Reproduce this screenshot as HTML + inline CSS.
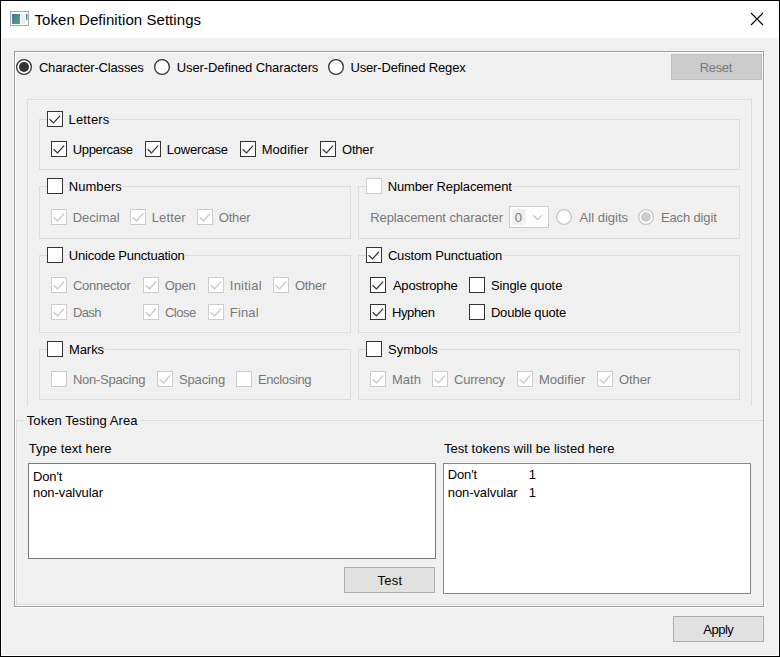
<!DOCTYPE html>
<html><head><meta charset="utf-8"><title>Token Definition Settings</title>
<style>
html,body{margin:0;padding:0;}
body{width:780px;height:657px;overflow:hidden;background:#f0f0f0;font-family:"Liberation Sans",sans-serif;}
#win{position:absolute;left:0;top:0;width:778px;height:655px;border:1px solid #000;background:#f0f0f0;overflow:hidden;box-shadow:inset 0 0 0 1px #fff;}
#win>*{position:absolute;box-sizing:border-box;}
#tb{left:0;top:0;width:778px;height:37px;background:#fff;}
.t{font-size:13px;line-height:24px;height:24px;white-space:pre;color:#000;}
.d{color:#787878;}
.gb{border:1px solid #dcdcdc;}
.cap{background:#f0f0f0;height:16px;}
.cb{width:16px;height:16px;background:#fff;border:1px solid #333;}
.cb.off{border-color:#ccc;}
.rb{width:16px;height:16px;background:#fff;border:1px solid #333;border-radius:50%;}
.rb.off{border-color:#ccc;}
.btn{background:#e1e1e1;border:1px solid #adadad;}
.btn.off{background:#ccc;border-color:#bfbfbf;}
svg{position:absolute;left:-1px;top:-1px;}
</style></head><body><div id="win">

<div id="tb"></div>
<svg style="left:9px;top:10px" width="20" height="16" viewBox="0 0 20 16">
<defs><linearGradient id="g1" x1="0" y1="0" x2="1" y2="1"><stop offset="0" stop-color="#3f6fb0"/><stop offset="1" stop-color="#4fae5a"/></linearGradient></defs>
<rect x="0.5" y="0.5" width="18" height="14" fill="#fff" stroke="#a2a7b1"/>
<rect x="2" y="3" width="8" height="10" fill="url(#g1)"/>
<rect x="11" y="3" width="4" height="10" fill="#ececec"/>
<rect x="16" y="3" width="1.5" height="6" fill="url(#g1)"/>
</svg>
<div class="t" style="left:33.5px;top:4px;font-size:15px;line-height:30px;height:30px;letter-spacing:0.06px">Token Definition Settings</div>
<svg style="left:749px;top:11px" width="14" height="14" viewBox="0 0 14 14"><path d="M1 1 L13 13 M13 1 L1 13" stroke="#000" stroke-width="1.1" fill="none"/></svg>
<div style="left:14px;top:51px;width:750px;height:556px;border:1px solid #fff;"></div>
<div style="left:13px;top:50px;width:750px;height:556px;border:1px solid #a0a0a0;"></div>
<div style="left:14px;top:51px;width:748px;height:554px;border:1px solid #fff;border-right-color:#f5f5f5;border-bottom-color:#fbfbfb"></div>
<div class="gb" style="left:26px;top:98px;width:725px;height:307px;border-bottom:none"></div>
<div class="gb" style="left:38px;top:118px;width:701px;height:51px"></div>
<div class="cap" style="left:46px;top:110px;width:63px"></div>
<div class="gb" style="left:38px;top:185px;width:312px;height:53px"></div>
<div class="cap" style="left:46px;top:177px;width:75px"></div>
<div class="gb" style="left:357px;top:185px;width:382px;height:53px"></div>
<div class="cap" style="left:365px;top:177px;width:147px"></div>
<div class="gb" style="left:38px;top:254px;width:312px;height:78px"></div>
<div class="cap" style="left:46px;top:246px;width:138px"></div>
<div class="gb" style="left:357px;top:254px;width:382px;height:78px"></div>
<div class="cap" style="left:365px;top:246px;width:137px"></div>
<div class="gb" style="left:38px;top:348px;width:312px;height:51px"></div>
<div class="cap" style="left:46px;top:340px;width:58px"></div>
<div class="gb" style="left:357px;top:348px;width:382px;height:51px"></div>
<div class="cap" style="left:365px;top:340px;width:72px"></div>
<div class="gb" style="left:15px;top:419px;width:747px;height:185px;border-right:none"></div>
<div class="cap" style="left:23px;top:411px;width:116px"></div>
<svg style="left:15px;top:58px" width="16" height="16" viewBox="0 0 16 16"><circle cx="8" cy="8" r="7.35" fill="#fff" stroke="#333" stroke-width="1.3"/><circle cx="8" cy="8" r="5" fill="#333"/></svg>
<svg style="left:153px;top:58px" width="16" height="16" viewBox="0 0 16 16"><circle cx="8" cy="8" r="7.35" fill="#fff" stroke="#333" stroke-width="1.3"/></svg>
<svg style="left:327px;top:58px" width="16" height="16" viewBox="0 0 16 16"><circle cx="8" cy="8" r="7.35" fill="#fff" stroke="#333" stroke-width="1.3"/></svg>
<div class="btn off" style="left:670px;top:53px;width:91px;height:26px"></div>
<div class="cb" style="left:46px;top:110px"><svg width="16" height="16" viewBox="0 0 16 16"><path d="M2.6 8.3 L6.5 11.9 L13.1 4.6" stroke="#333" stroke-width="1.25" fill="none"/></svg></div>
<div class="cb" style="left:50px;top:140px"><svg width="16" height="16" viewBox="0 0 16 16"><path d="M2.6 8.3 L6.5 11.9 L13.1 4.6" stroke="#333" stroke-width="1.25" fill="none"/></svg></div>
<div class="cb" style="left:144px;top:140px"><svg width="16" height="16" viewBox="0 0 16 16"><path d="M2.6 8.3 L6.5 11.9 L13.1 4.6" stroke="#333" stroke-width="1.25" fill="none"/></svg></div>
<div class="cb" style="left:239px;top:140px"><svg width="16" height="16" viewBox="0 0 16 16"><path d="M2.6 8.3 L6.5 11.9 L13.1 4.6" stroke="#333" stroke-width="1.25" fill="none"/></svg></div>
<div class="cb" style="left:319px;top:140px"><svg width="16" height="16" viewBox="0 0 16 16"><path d="M2.6 8.3 L6.5 11.9 L13.1 4.6" stroke="#333" stroke-width="1.25" fill="none"/></svg></div>
<div class="cb" style="left:46px;top:177px"></div>
<div class="cb off" style="left:50px;top:208px"><svg width="16" height="16" viewBox="0 0 16 16"><path d="M2.6 8.3 L6.5 11.9 L13.1 4.6" stroke="#ccc" stroke-width="1.5" fill="none"/></svg></div>
<div class="cb off" style="left:129px;top:208px"><svg width="16" height="16" viewBox="0 0 16 16"><path d="M2.6 8.3 L6.5 11.9 L13.1 4.6" stroke="#ccc" stroke-width="1.5" fill="none"/></svg></div>
<div class="cb off" style="left:196px;top:208px"><svg width="16" height="16" viewBox="0 0 16 16"><path d="M2.6 8.3 L6.5 11.9 L13.1 4.6" stroke="#ccc" stroke-width="1.5" fill="none"/></svg></div>
<div class="cb off" style="left:365px;top:177px"></div>
<div style="left:508px;top:205px;width:40px;height:22px;background:#fff;border:1px solid #ccc"></div>
<div style="left:511px;top:208px;width:14px;height:16px;background:#f0f0f0"></div>
<svg style="left:531px;top:212px" width="12" height="8" viewBox="0 0 12 8"><path d="M1.2 2.4 L5.6 6.7 L9.8 2.4" stroke="#999" stroke-width="1" fill="none"/></svg>
<svg style="left:555px;top:208px" width="16" height="16" viewBox="0 0 16 16"><circle cx="8" cy="8" r="7.35" fill="#fff" stroke="#c6c6c6" stroke-width="1.3"/></svg>
<svg style="left:637px;top:208px" width="16" height="16" viewBox="0 0 16 16"><circle cx="8" cy="8" r="7.35" fill="#fff" stroke="#c6c6c6" stroke-width="1.3"/><circle cx="8" cy="8" r="5" fill="#ccc"/></svg>
<div class="cb" style="left:46px;top:246px"></div>
<div class="cb off" style="left:50px;top:276px"><svg width="16" height="16" viewBox="0 0 16 16"><path d="M2.6 8.3 L6.5 11.9 L13.1 4.6" stroke="#ccc" stroke-width="1.5" fill="none"/></svg></div>
<div class="cb off" style="left:142px;top:276px"><svg width="16" height="16" viewBox="0 0 16 16"><path d="M2.6 8.3 L6.5 11.9 L13.1 4.6" stroke="#ccc" stroke-width="1.5" fill="none"/></svg></div>
<div class="cb off" style="left:207px;top:276px"><svg width="16" height="16" viewBox="0 0 16 16"><path d="M2.6 8.3 L6.5 11.9 L13.1 4.6" stroke="#ccc" stroke-width="1.5" fill="none"/></svg></div>
<div class="cb off" style="left:272px;top:276px"><svg width="16" height="16" viewBox="0 0 16 16"><path d="M2.6 8.3 L6.5 11.9 L13.1 4.6" stroke="#ccc" stroke-width="1.5" fill="none"/></svg></div>
<div class="cb off" style="left:50px;top:303px"><svg width="16" height="16" viewBox="0 0 16 16"><path d="M2.6 8.3 L6.5 11.9 L13.1 4.6" stroke="#ccc" stroke-width="1.5" fill="none"/></svg></div>
<div class="cb off" style="left:142px;top:303px"><svg width="16" height="16" viewBox="0 0 16 16"><path d="M2.6 8.3 L6.5 11.9 L13.1 4.6" stroke="#ccc" stroke-width="1.5" fill="none"/></svg></div>
<div class="cb off" style="left:207px;top:303px"><svg width="16" height="16" viewBox="0 0 16 16"><path d="M2.6 8.3 L6.5 11.9 L13.1 4.6" stroke="#ccc" stroke-width="1.5" fill="none"/></svg></div>
<div class="cb" style="left:365px;top:246px"><svg width="16" height="16" viewBox="0 0 16 16"><path d="M2.6 8.3 L6.5 11.9 L13.1 4.6" stroke="#333" stroke-width="1.25" fill="none"/></svg></div>
<div class="cb" style="left:369px;top:276px"><svg width="16" height="16" viewBox="0 0 16 16"><path d="M2.6 8.3 L6.5 11.9 L13.1 4.6" stroke="#333" stroke-width="1.25" fill="none"/></svg></div>
<div class="cb" style="left:468px;top:276px"></div>
<div class="cb" style="left:369px;top:303px"><svg width="16" height="16" viewBox="0 0 16 16"><path d="M2.6 8.3 L6.5 11.9 L13.1 4.6" stroke="#333" stroke-width="1.25" fill="none"/></svg></div>
<div class="cb" style="left:468px;top:303px"></div>
<div class="cb" style="left:46px;top:340px"></div>
<div class="cb off" style="left:50px;top:370px"></div>
<div class="cb off" style="left:156px;top:370px"><svg width="16" height="16" viewBox="0 0 16 16"><path d="M2.6 8.3 L6.5 11.9 L13.1 4.6" stroke="#ccc" stroke-width="1.5" fill="none"/></svg></div>
<div class="cb off" style="left:235px;top:370px"></div>
<div class="cb" style="left:365px;top:340px"></div>
<div class="cb off" style="left:369px;top:370px"><svg width="16" height="16" viewBox="0 0 16 16"><path d="M2.6 8.3 L6.5 11.9 L13.1 4.6" stroke="#ccc" stroke-width="1.5" fill="none"/></svg></div>
<div class="cb off" style="left:431px;top:370px"><svg width="16" height="16" viewBox="0 0 16 16"><path d="M2.6 8.3 L6.5 11.9 L13.1 4.6" stroke="#ccc" stroke-width="1.5" fill="none"/></svg></div>
<div class="cb off" style="left:516px;top:370px"><svg width="16" height="16" viewBox="0 0 16 16"><path d="M2.6 8.3 L6.5 11.9 L13.1 4.6" stroke="#ccc" stroke-width="1.5" fill="none"/></svg></div>
<div class="cb off" style="left:596px;top:370px"><svg width="16" height="16" viewBox="0 0 16 16"><path d="M2.6 8.3 L6.5 11.9 L13.1 4.6" stroke="#ccc" stroke-width="1.5" fill="none"/></svg></div>
<div style="left:27px;top:462px;width:408px;height:96px;background:#fff;border:1px solid #7a7a7a"></div>
<div style="left:442px;top:462px;width:308px;height:131px;background:#fff;border:1px solid #828790"></div>
<div class="btn" style="left:343px;top:566px;width:91px;height:26px"></div>
<div class="btn" style="left:672px;top:615px;width:91px;height:26px"></div>
<div class="t" style="left:37.9px;top:55.0px;letter-spacing:-0.169px">Character-Classes</div>
<div class="t" style="left:175.8px;top:55.0px;letter-spacing:-0.100px">User-Defined Characters</div>
<div class="t" style="left:349.4px;top:55.0px;letter-spacing:-0.141px">User-Defined Regex</div>
<div class="t d" style="left:698.7px;top:55.0px;letter-spacing:-0.325px">Reset</div>
<div class="t" style="left:67.5px;top:107.0px;letter-spacing:0.183px">Letters</div>
<div class="t" style="left:71.7px;top:137.0px;letter-spacing:-0.312px">Uppercase</div>
<div class="t" style="left:165.8px;top:137.0px;letter-spacing:-0.213px">Lowercase</div>
<div class="t" style="left:260.7px;top:137.0px;letter-spacing:0.057px">Modifier</div>
<div class="t" style="left:341.0px;top:137.0px;letter-spacing:-0.200px">Other</div>
<div class="t" style="left:67.7px;top:174.0px;letter-spacing:0.067px">Numbers</div>
<div class="t d" style="left:71.7px;top:205.0px;letter-spacing:0.000px">Decimal</div>
<div class="t d" style="left:150.7px;top:205.0px;letter-spacing:0.140px">Letter</div>
<div class="t d" style="left:217.7px;top:205.0px;letter-spacing:-0.150px">Other</div>
<div class="t" style="left:386.7px;top:174.0px;letter-spacing:-0.135px">Number Replacement</div>
<div class="t d" style="left:369.2px;top:205.0px;letter-spacing:-0.080px">Replacement character</div>
<div class="t d" style="left:513.8px;top:205.0px;letter-spacing:0.000px">0</div>
<div class="t d" style="left:578.6px;top:205.0px;letter-spacing:0.011px">All digits</div>
<div class="t d" style="left:659.9px;top:205.0px;letter-spacing:-0.133px">Each digit</div>
<div class="t" style="left:67.8px;top:243.0px;letter-spacing:-0.222px">Unicode Punctuation</div>
<div class="t d" style="left:71.9px;top:273.0px;letter-spacing:-0.250px">Connector</div>
<div class="t d" style="left:163.7px;top:273.0px;letter-spacing:-0.267px">Open</div>
<div class="t d" style="left:228.8px;top:273.0px;letter-spacing:0.233px">Initial</div>
<div class="t d" style="left:294.0px;top:273.0px;letter-spacing:-0.300px">Other</div>
<div class="t d" style="left:71.9px;top:300.0px;letter-spacing:-0.567px">Dash</div>
<div class="t d" style="left:163.9px;top:300.0px;letter-spacing:-0.500px">Close</div>
<div class="t d" style="left:228.8px;top:300.0px;letter-spacing:0.150px">Final</div>
<div class="t" style="left:386.9px;top:243.0px;letter-spacing:-0.159px">Custom Punctuation</div>
<div class="t" style="left:391.9px;top:273.0px;letter-spacing:-0.189px">Apostrophe</div>
<div class="t" style="left:489.9px;top:273.0px;letter-spacing:-0.073px">Single quote</div>
<div class="t" style="left:390.9px;top:300.0px;letter-spacing:-0.360px">Hyphen</div>
<div class="t" style="left:489.9px;top:300.0px;letter-spacing:-0.191px">Double quote</div>
<div class="t" style="left:67.9px;top:337.0px;letter-spacing:-0.050px">Marks</div>
<div class="t d" style="left:72.0px;top:367.0px;letter-spacing:-0.280px">Non-Spacing</div>
<div class="t d" style="left:177.9px;top:367.0px;letter-spacing:-0.117px">Spacing</div>
<div class="t d" style="left:256.9px;top:367.0px;letter-spacing:-0.337px">Enclosing</div>
<div class="t" style="left:387.0px;top:337.0px;letter-spacing:0.000px">Symbols</div>
<div class="t d" style="left:390.9px;top:367.0px;letter-spacing:0.067px">Math</div>
<div class="t d" style="left:453.0px;top:367.0px;letter-spacing:-0.243px">Currency</div>
<div class="t d" style="left:538.0px;top:367.0px;letter-spacing:0.014px">Modifier</div>
<div class="t d" style="left:618.0px;top:367.0px;letter-spacing:-0.100px">Other</div>
<div class="t" style="left:25.8px;top:408.0px;letter-spacing:0.065px">Token Testing Area</div>
<div class="t" style="left:27.8px;top:436.0px;letter-spacing:0.031px">Type text here</div>
<div class="t" style="left:442.9px;top:436.0px;letter-spacing:0.047px">Test tokens will be listed here</div>
<div class="t" style="left:32.0px;top:464.0px;letter-spacing:-0.150px">Don&#39;t</div>
<div class="t" style="left:32.0px;top:480.0px;letter-spacing:-0.073px">non-valvular</div>
<div class="t" style="left:446.8px;top:462.0px;letter-spacing:-0.150px">Don&#39;t</div>
<div class="t" style="left:446.8px;top:480.0px;letter-spacing:-0.091px">non-valvular</div>
<div class="t" style="left:527.7px;top:462.0px;letter-spacing:0.000px">1</div>
<div class="t" style="left:527.7px;top:480.0px;letter-spacing:0.000px">1</div>
<div class="t" style="left:376.4px;top:568.0px;letter-spacing:0.333px">Test</div>
<div class="t" style="left:702.2px;top:617.0px;letter-spacing:-0.475px">Apply</div>
</div></body></html>
